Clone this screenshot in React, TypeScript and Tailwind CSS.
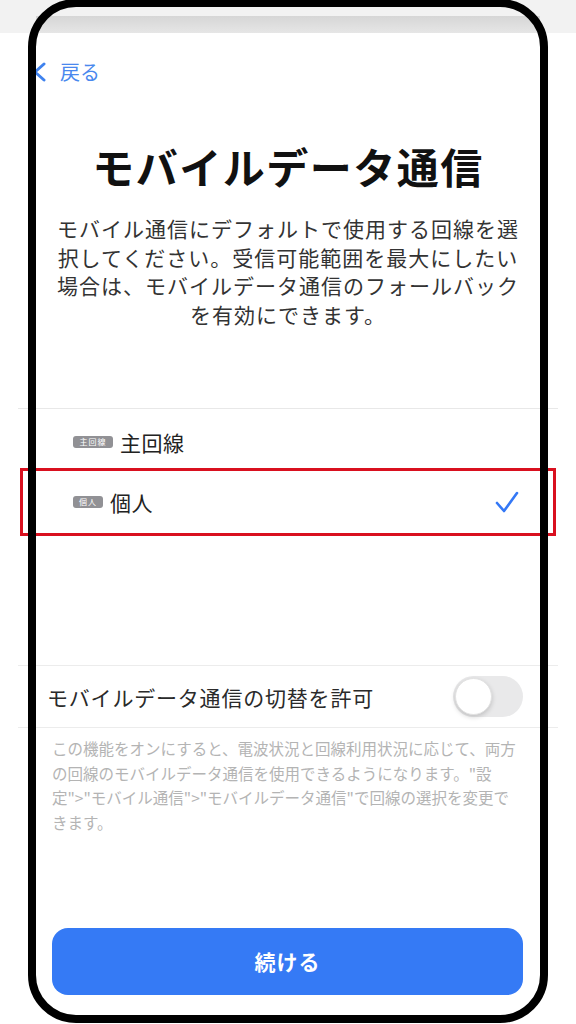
import React from 'react';

function Badge({ label, width }: { label: string; width: string }) {
  return (
    <span
      className={`${width} h-[12px] rounded-[3px] bg-[#919195] text-white text-[8px] leading-[12px] flex items-center justify-center tracking-[1px]`}
    >
      {label}
    </span>
  );
}

export default function App() {
  return (
    <div className="relative w-[576px] h-[1024px] bg-white overflow-hidden flex flex-col font-['Noto_Sans_CJK_JP',sans-serif]">
      {/* status area */}
      <div className="h-[33px] bg-[#f2f2f2] pt-[16px] flex flex-col">
        <div className="mx-[36px] h-[17px] bg-gradient-to-b from-[#d6d6d6] to-[#e6e6e6]" />
      </div>

      {/* back */}
      <div className="mt-[19px] h-[40px] flex items-center pl-[32px]">
        <svg width="14" height="20" viewBox="0 0 14 20" className="shrink-0">
          <polyline
            points="12,2 3,10 12,18"
            fill="none"
            stroke="#3f82ee"
            strokeWidth="3"
            strokeLinecap="round"
            strokeLinejoin="round"
          />
        </svg>
        <span className="ml-[14px] text-[20px] leading-[40px] text-[#4a88ee]">戻る</span>
      </div>

      {/* title */}
      <h1 className="mt-[49px] text-center text-[42px] leading-[50px] font-bold tracking-[1.5px] text-[#111]">
        モバイルデータ通信
      </h1>

      {/* description */}
      <p className="mt-[23px] text-center text-[21px] leading-[28.5px] tracking-[1px] text-[#333] whitespace-nowrap">
        モバイル通信にデフォルトで使用する回線を選
        <br />
        択してください。受信可能範囲を最大にしたい
        <br />
        場合は、モバイルデータ通信のフォールバック
        <br />
        を有効にできます。
      </p>

      <div className="mt-[80px] mx-[18px] h-px bg-[#e8e8e8]" />

      {/* line options */}
      <div className="h-[59px] pt-[6px] pl-[73px] flex items-center gap-[7px]">
        <Badge label="主回線" width="w-[40px]" />
        <span className="text-[21px] leading-[28px] text-[#222] tracking-[0.5px]">主回線</span>
      </div>
      <div className="h-[68px] mx-[20px] border-[3px] border-[#d9101f] pl-[50px] pr-[34px] flex items-center">
        <Badge label="個人" width="w-[30px]" />
        <span className="ml-[7px] text-[21px] leading-[28px] text-[#222] tracking-[0.5px]">個人</span>
        <svg width="24" height="22" viewBox="0 0 24 22" className="ml-auto">
          <polyline
            points="2,12 9,20 22,2"
            fill="none"
            stroke="#3478f6"
            strokeWidth="2.6"
            strokeLinecap="round"
            strokeLinejoin="round"
          />
        </svg>
      </div>

      <div className="mt-[129px] mx-[18px] h-px bg-[#ececec]" />

      {/* fallback toggle */}
      <div className="h-[61px] pl-[47px] pr-[53px] flex items-center justify-between">
        <span className="text-[21px] leading-[28px] tracking-[0.8px] text-[#2a2a2a]">
          モバイルデータ通信の切替を許可
        </span>
        <div className="w-[70px] h-[41px] rounded-full bg-[#e9e9ea] p-[2px] flex items-center">
          <div className="w-[37px] h-[37px] rounded-full bg-white shadow-[0_2px_5px_rgba(0,0,0,0.18)] border border-[#e2e2e2]" />
        </div>
      </div>

      <div className="mx-[18px] h-px bg-[#ececec]" />

      <p className="pt-[8px] pl-[52px] text-[15.5px] leading-[24.7px] text-[#b4b4b4] whitespace-nowrap">
        この機能をオンにすると、電波状況と回線利用状況に応じて、両方
        <br />
        の回線のモバイルデータ通信を使用できるようになります。"設
        <br />
        定"&gt;"モバイル通信"&gt;"モバイルデータ通信"で回線の選択を変更で
        <br />
        きます。
      </p>

      <button className="mt-[93px] ml-[52px] w-[471px] h-[67px] rounded-[16px] bg-[#357af5] text-white text-[21px] font-semibold tracking-[1px]">
        続ける
      </button>

      {/* device frame */}
      <div className="absolute left-[28px] top-[-1px] w-[520px] h-[1024px] border-[8px] border-black rounded-[48px] pointer-events-none" />
    </div>
  );
}
